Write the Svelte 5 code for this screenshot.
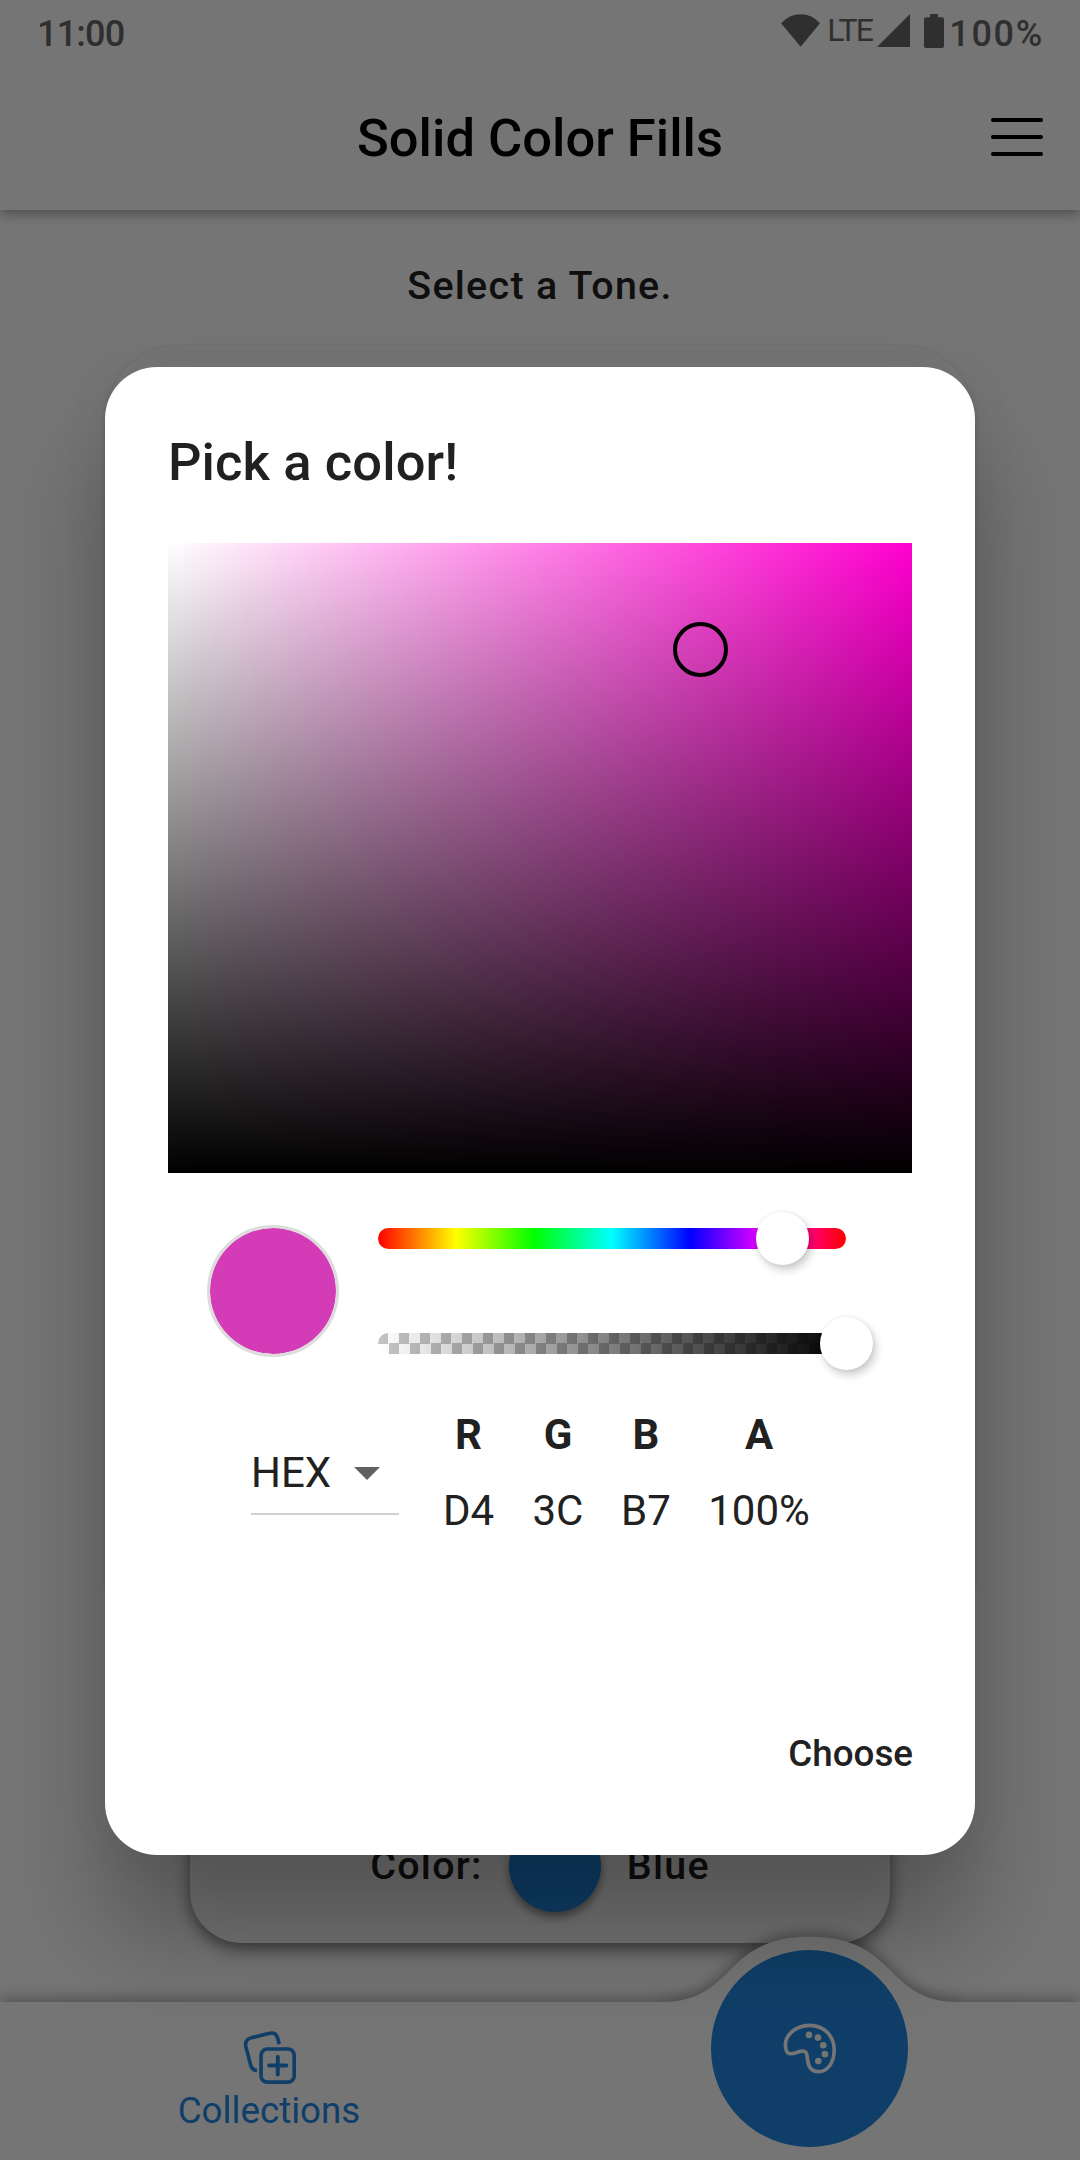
<script>
  const channels = [
    { label: 'R', value: 'D4', width: 90 },
    { label: 'G', value: '3C', width: 89 },
    { label: 'B', value: 'B7', width: 87 },
    { label: 'A', value: '100%', width: 139 }
  ];
  const hue = 311.4;
  const saturation = 71.7;
  const brightness = 83.1;
</script>

<div class="screen">
  <div class="status">
    <span class="clock">11:00</span>
    <div class="indicators">
      <svg class="wifi" viewBox="63 42 117 98"><path d="M122 140L63 69Q88 42 122 42Q156 42 180 69Z" /></svg>
      <span class="lte">LTE</span>
      <svg class="signal" viewBox="352 43 98 98"><path d="M352 141H450V43Z" /></svg>
      <svg class="battery" viewBox="492 42 60 102"><path d="M510 42H534V52H546Q552 52 552 58V138Q552 144 546 144H498Q492 144 492 138V58Q492 52 498 52H510Z" /></svg>
      <span class="level">100%</span>
    </div>
  </div>

  <header>
    <h1>Solid Color Fills</h1>
    <button class="menu" aria-label="Menu"><i></i><i></i><i></i></button>
  </header>

  <main>
    <p class="hint">Select a Tone.</p>
    <section class="preview"></section>
    <section class="tone">
      <span>Color:</span>
      <b class="dot"></b>
      <span>Blue</span>
    </section>
  </main>

  <nav>
    <svg class="bump" viewBox="0 0 320 70">
      <path d="M10 67C46 67 62 50 80 32C102 10 124 1.700 157 1.700C190 1.700 212 10 234 32C252 50 268 67 304 67V70H10Z" />
    </svg>
    <a class="tab" href="#collections">
      <svg viewBox="66 90 166 164">
        <path d="M178 132L175 118Q170 94 150 99L95 112Q72 119 78 140L92 195Q97 211 111 211" />
        <rect x="123.500" y="146.500" width="100" height="100" rx="19" />
        <path class="plus" d="M148 196H200M174 170V223" />
      </svg>
      <span>Collections</span>
    </a>
    <button class="fab" aria-label="Palette">
      <svg viewBox="130 124 162 154">
        <path d="M138 200C130 165 165 131 210 131C255 131 284 165 284 205C284 245 264 271 235 271C212 271 205 253 203 230C202 214 198 207 185 209C172 211 165 217 152 217C144 217 139 210 138 200Z" />
        <circle cx="208" cy="160" r="10" /><circle cx="235" cy="168" r="10" /><circle cx="251" cy="191" r="10" />
        <circle cx="256" cy="218" r="10" /><circle cx="236" cy="239" r="10" />
      </svg>
    </button>
  </nav>

  <div class="scrim">
    <div class="dialog" role="dialog">
      <h2>Pick a color!</h2>
      <div class="area" style="--hue: {hue}">
        <i class="cursor" style="left: {saturation}%; top: {100 - brightness}%"></i>
      </div>
      <div class="controls">
        <div class="swatch"></div>
        <div class="sliders">
          <div class="track rainbow"><i class="thumb" style="left: {hue / 3.6}%"></i></div>
          <div class="track alpha"><i class="thumb" style="left: 100%"></i></div>
        </div>
      </div>
      <div class="values">
        <div class="mode">
          <span>HEX</span>
          <svg viewBox="0 0 26 13"><path d="M0 0H26L13 13Z" /></svg>
        </div>
        <div class="channels">
          {#each channels as c}
            <div class="channel" style="width: {c.width}px"><strong>{c.label}</strong><span>{c.value}</span></div>
          {/each}
        </div>
      </div>
      <button class="choose">Choose</button>
    </div>
  </div>
</div>

<style>
  :global(body) { margin: 0; }
  .screen, .screen :global(*) { box-sizing: border-box; }
  .screen {
    position: relative;
    display: flex;
    flex-direction: column;
    width: 1080px;
    height: 2160px;
    overflow: hidden;
    background: #fff;
    color: #212121;
    font-family: Roboto, sans-serif;
  }
  button { border: 0; padding: 0; background: none; font: inherit; color: inherit; }
  svg { display: block; }
  h1, h2, p { margin: 0; }

  .status {
    display: flex;
    justify-content: space-between;
    height: 63px;
    padding: 0 36px 0 37px;
    color: #686868;
    font-weight: 500;
    font-size: 36px;
    line-height: 68px;
  }
  .clock { letter-spacing: -.8px; }
  .level { letter-spacing: 1.700px; }
  .indicators { display: flex; align-items: flex-start; }
  .indicators svg { fill: #686868; }
  .wifi { width: 39px; height: 33px; margin-top: 14px; }
  .lte { width: 43px; margin: 0 7px 0 7px; font-weight: 400; font-size: 32px; line-height: 61px; letter-spacing: -1.800px; white-space: nowrap; }
  .signal { width: 33px; height: 33px; margin-top: 14px; }
  .battery { width: 20px; height: 34px; margin: 14px 5px 0 14px; }

  header {
    position: relative;
    display: flex;
    align-items: center;
    justify-content: center;
    height: 147px;
    flex: none;
    padding-top: 2px;
    box-shadow: 0 3px 12px rgba(0, 0, 0, .38);
    clip-path: inset(0 0 -30px);
    color: #000;
  }
  h1 { font-weight: 500; font-size: 52.500px; line-height: 60px; }
  .menu { position: absolute; right: 37px; top: 55px; display: flex; flex-direction: column; gap: 13px; width: 52px; }
  .menu i { height: 4px; border-radius: 2px; background: #000; }

  main { display: flex; flex-direction: column; align-items: center; height: 1792px; flex: none; }
  .hint { margin-top: 53px; font-weight: 500; font-size: 39.400px; line-height: 46px; letter-spacing: 1.300px; }
  .preview { width: 870px; height: 1300px; margin-top: 37px; border-radius: 75px; box-shadow: 0 2px 6px rgba(0, 0, 0, .16); }
  .tone {
    display: flex;
    align-items: center;
    justify-content: center;
    gap: 26px;
    width: 700px;
    height: 157px;
    margin-top: 140px;
    padding-top: 2px;
    border-radius: 0 0 52px 52px;
    box-shadow: 0 6px 16px rgba(0, 0, 0, .5);
    font-weight: 500;
    font-size: 39.400px;
    letter-spacing: 1.300px;
  }
  .dot { width: 92px; height: 92px; border-radius: 50%; background: #2189e4; box-shadow: 0 5px 10px rgba(0, 0, 0, .45); }

  nav {
    position: relative;
    display: flex;
    height: 158px;
    flex: none;
    background: #fff;
    box-shadow: 0 -4px 14px rgba(0, 0, 0, .3);
  }
  .bump { position: absolute; left: 653px; top: -67px; width: 320px; height: 70px; overflow: visible; fill: #fff; filter: drop-shadow(0 -3px 7px rgba(0, 0, 0, .36)); clip-path: inset(-30px -10px 3px -10px); }
  .tab { display: flex; flex-direction: column; align-items: center; width: 538px; padding-top: 28px; color: #2189e4; font-size: 36.750px; line-height: 44px; text-decoration: none; }
  .tab svg { width: 55px; height: 55px; margin-bottom: 4px; fill: none; stroke: #2189e4; stroke-width: 11; }
  .tab .plus { stroke-linecap: round; stroke-width: 12; }
  .fab { position: absolute; left: 711px; top: -52px; display: flex; align-items: center; justify-content: center; width: 197px; height: 197px; border-radius: 50%; background: #2189e4; }
  .fab svg { width: 54px; height: 51px; fill: none; stroke: #fff; stroke-width: 11; }
  .fab circle { fill: #fff; stroke: none; }

  .scrim { position: absolute; inset: 0; padding: 367px 105px 0; background: rgba(0, 0, 0, .54); }
  .dialog {
    display: flex;
    flex-direction: column;
    height: 1488px;
    padding: 0 63px;
    border-radius: 52px;
    background: #fff;
    box-shadow: 0 80px 100px 0 rgba(0, 0, 0, .27), 0 0 50px 0 rgba(0, 0, 0, .05);
  }
  h2 { margin-top: 64px; font-weight: 500; font-size: 52.500px; line-height: 62px; letter-spacing: .1px; }
  .area {
    position: relative;
    height: 630px;
    flex: none;
    margin-top: 50px;
    background: linear-gradient(transparent, #000), linear-gradient(90deg, #fff, hsl(var(--hue) 100% 50%));
  }
  .cursor { position: absolute; width: 55px; height: 55px; margin: -27px 0 0 -28px; border: 4px solid #000; border-radius: 50%; }
  .controls { display: flex; gap: 39px; padding: 52px 0 0 39px; height: 184px; }
  .swatch { width: 132px; height: 132px; border: 3px solid #dcdcdc; border-radius: 50%; background: #d43cb7; background-clip: padding-box; }
  .sliders { display: flex; flex-direction: column; gap: 84px; width: 468px; padding-top: 3px; }
  .track { position: relative; height: 21px; border-radius: 10.500px; }
  .rainbow { background: linear-gradient(90deg, #f00, #ff0, #0f0, #0ff, #00f, #f0f, #f00); }
  .alpha { background: linear-gradient(90deg, transparent, #000), repeating-conic-gradient(#fff 0 25%, #c4c4c4 0 50%) 0 0 / 21px 21px; }
  .thumb { position: absolute; top: -16px; width: 53px; height: 53px; margin-left: -26.500px; border-radius: 50%; background: #fff; box-shadow: 3px 5px 8px rgba(0, 0, 0, .2), 0 0 4px rgba(0, 0, 0, .08); }
  .values { display: flex; padding: 53px 0 0 83px; font-size: 42px; line-height: 50px; }
  .mode { display: flex; align-items: center; justify-content: space-between; width: 148px; height: 83px; margin-top: 22px; padding-right: 19px; border-bottom: 2px solid #d0d0d0; }
  .mode svg { width: 26px; height: 13px; margin-top: 2px; fill: #616161; }
  .channels { display: flex; margin-left: 24.500px; }
  .channel { display: flex; flex-direction: column; gap: 26px; text-align: center; }
  .choose { align-self: flex-end; margin: auto -1px 79px; font-weight: 500; font-size: 36.750px; line-height: 44px; }
</style>
